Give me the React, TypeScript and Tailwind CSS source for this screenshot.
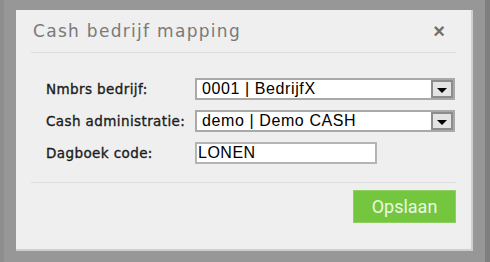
const fieldFont = { fontFamily: '"Liberation Sans", Arial, sans-serif' }

const SelectBox = ({ value }: { value: string }) => (
  <div className="flex h-[22px] w-[260px] items-stretch border-2 border-[#a9a9a9] bg-white">
    <span
      className="flex flex-1 items-center pl-[5px] text-[16px] leading-none tracking-[0.6px] text-black"
      style={fieldFont}
    >
      {value}
    </span>
    <span className="flex w-[22px] items-center justify-center border-2 border-[#8c8c8c] bg-[#e4e4e4] pt-[3px]">
      <span className="h-0 w-0 border-x-[5px] border-t-[5px] border-x-transparent border-t-black" />
    </span>
  </div>
)

const Label = ({ children }: { children: string }) => (
  <span className="w-[149px] text-[13.5px] tracking-[0.4px] text-[#1c1c1c] [-webkit-text-stroke:0.35px_#1c1c1c]">
    {children}
  </span>
)

export default function App() {
  return (
    <div
      className="flex h-[262px] w-[490px] overflow-hidden bg-[#979797]"
      style={{ fontFamily: '"DejaVu Sans", Verdana, sans-serif' }}
    >
      <div className="h-full w-[4px] bg-[#8e8e8e]" />
      <div className="flex-1 pl-[12px] pt-[10px]">
        <div className="flex h-[241px] w-[457px] flex-col border-b-2 border-r-2 border-[#cfcfcf] bg-[#efefef] px-[15px]">
          <div className="flex h-[43px] items-center justify-between border-b border-[#dcdcdc] pl-[2px] pr-[11px]">
            <h1 className="pt-[1px] text-[17px] tracking-[1.3px] text-[#7a7a7a]">Cash bedrijf mapping</h1>
            <span className="text-[20px] font-bold leading-none text-[#6f6f6f]" style={fieldFont}>
              ×
            </span>
          </div>

          <div className="flex flex-col gap-[9px] pl-[15px] pt-[25px]">
            <div className="flex items-center">
              <Label>Nmbrs bedrijf:</Label>
              <SelectBox value="0001 | BedrijfX" />
            </div>
            <div className="flex items-center pt-[1px]">
              <Label>Cash administratie:</Label>
              <SelectBox value="demo | Demo CASH" />
            </div>
            <div className="flex items-center pt-[1px]">
              <Label>Dagboek code:</Label>
              <input
                readOnly
                value="LONEN"
                className="h-[22px] w-[182px] border-2 border-[#b4b4b4] bg-white pl-[1px] text-[16px] tracking-[0.5px] text-black outline-none"
                style={fieldFont}
              />
            </div>
          </div>

          <div className="mt-[18px] flex justify-end border-t border-[#dcdcdc] pt-[7px]">
            <button
              className="h-[33px] w-[103px] border border-[#8fd062] bg-[#74c63f] text-[18px] text-[#eaf6e2]"
              style={{ fontFamily: 'Roboto, sans-serif' }}
            >
              Opslaan
            </button>
          </div>
        </div>
      </div>
      <div className="h-full w-[5px] bg-[#7f7f7f]" />
    </div>
  )
}
